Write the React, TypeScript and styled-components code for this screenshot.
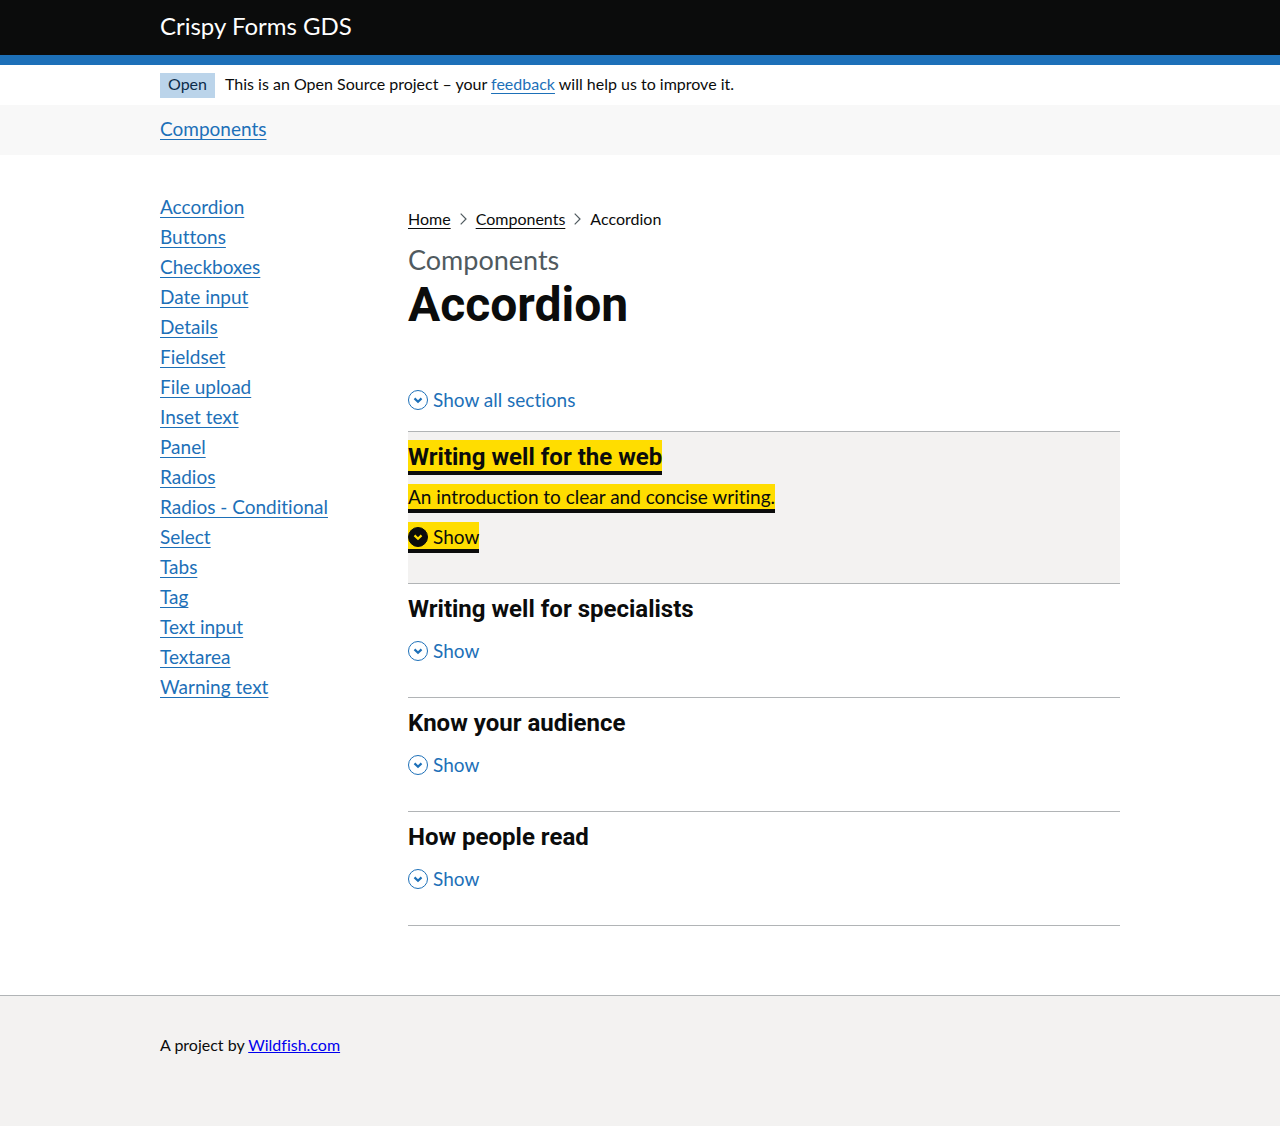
import React, { useState } from 'react';
import styled, { createGlobalStyle, css } from 'styled-components';

const colours = {
  text: '#0b0c0c',
  secondary: '#505a5f',
  link: '#1d70b8',
  border: '#b1b4b6',
  panel: '#f3f2f1',
  focus: '#ffdd00',
};

const GlobalStyle = createGlobalStyle`
  *, *::before, *::after { box-sizing: border-box; }
  body {
    margin: 0;
    color: ${colours.text};
    background: #ffffff;
    font-family: Lato, "Liberation Sans", sans-serif;
    font-size: 19px;
    font-variant-ligatures: none;
    line-height: 25px;
    -webkit-font-smoothing: antialiased;
  }
  button { font-variant-ligatures: inherit; }
`;

const Page = styled.div`
  display: flex;
  flex-direction: column;
  min-height: 100vh;
`;

const Container = styled.div`
  width: 100%;
  max-width: 1020px;
  margin: 0 auto;
  padding: 0 30px;
`;

const Link = styled.a<{ $tone?: 'text' }>`
  color: ${p => (p.$tone === 'text' ? colours.text : colours.link)};
  text-decoration: underline;
  text-decoration-thickness: 1px;
  text-decoration-skip-ink: none;
  text-underline-offset: 3px;
`;

const Header = styled.header`
  background: ${colours.text};
  border-bottom: 10px solid ${colours.link};
`;

const SiteName = styled.a`
  display: block;
  padding: 11px 0 14px;
  color: #ffffff;
  font-size: 24px;
  line-height: 30px;
  text-decoration: none;
`;

const PhaseBanner = styled.div`
  display: flex;
  align-items: baseline;
  gap: 10px;
  padding: 8px 0 7px;
  font-size: 16px;
  line-height: 20px;
`;

const Tag = styled.strong`
  padding: 1px 8px 4px;
  color: #0c2d4a;
  background: #bbd4ea;
  font-weight: 400;
`;

const PhaseText = styled.p`
  margin: 0;
`;

const TopNav = styled.nav`
  padding: 11px 0 14px;
  background: #f8f8f8;
`;

const Columns = styled.div`
  display: grid;
  grid-template-columns: 218px 1fr;
  gap: 30px;
  padding: 39px 0 69px;
`;

const SideList = styled.ul`
  display: grid;
  gap: 5px;
  align-content: start;
  margin: 0;
  padding: 0;
  list-style: none;
`;

const Main = styled.main`
  min-width: 0;
  padding-top: 15px;
`;

const Crumbs = styled.ol`
  display: flex;
  align-items: center;
  margin: 0;
  padding: 0 0 16px;
  font-size: 16px;
  line-height: 20px;
  list-style: none;
`;

const Crumb = styled.li`
  display: flex;
  align-items: center;
`;

const CrumbArrow = styled.svg`
  width: 7px;
  height: 12px;
  margin: 0 9px;
`;

const Caption = styled.span`
  display: block;
  color: ${colours.secondary};
  font-size: 27px;
  line-height: 30px;
`;

const Title = styled.h1`
  margin: 0 0 52px;
  font-family: Roboto, "Liberation Sans", sans-serif;
  font-size: 48px;
  font-weight: 700;
  line-height: 60px;
`;

const toggleText = css`
  display: flex;
  align-items: center;
  gap: 5px;
  color: ${colours.link};
  font-size: 19px;
  font-weight: 400;
`;

const ShowAll = styled.button`
  ${toggleText}
  height: 25px;
  margin: 0 0 19px;
  padding: 0;
  border: 0;
  background: none;
  font-family: inherit;
  cursor: pointer;
`;

const Icon = styled.svg`
  flex: none;
  width: 20px;
  height: 20px;
`;

const Accordion = styled.div`
  border-bottom: 1px solid ${colours.border};
`;

const SectionHeading = styled.h2`
  margin: 0;
  font-size: 24px;
`;

const SectionTitle = styled.span`
  height: 31px;
  padding-top: 2px;
  font-family: Roboto, "Liberation Sans", sans-serif;
  font-size: 24px;
  font-weight: 700;
  line-height: 30px;
`;

const SectionSummary = styled.span`
  font-size: 19px;
  font-weight: 400;
  line-height: 25px;
`;

const SectionToggle = styled.span`
  ${toggleText}
  height: 27px;
  padding: 3px 0 0;
  line-height: 24px;
`;

const SectionButton = styled.button<{ $active: boolean }>`
  display: flex;
  flex-direction: column;
  align-items: flex-start;
  gap: 13px;
  width: 100%;
  padding: 8px 0 34px;
  border: 0;
  border-top: 1px solid ${colours.border};
  outline: 0;
  color: ${colours.text};
  background: ${p => (p.$active ? colours.panel : 'transparent')};
  font-family: inherit;
  text-align: left;
  cursor: pointer;

  ${p => p.$active && css`
    & > span {
      color: ${colours.text};
      background: ${colours.focus};
      box-shadow: 0 4px ${colours.text};
    }
  `}
`;

const Footer = styled.footer`
  flex: 1;
  padding: 39px 0 60px;
  border-top: 1px solid ${colours.border};
  background: ${colours.panel};
  font-size: 16px;
  line-height: 20px;
`;

const FooterLink = styled.a`
  color: #0000ee;
`;

function Chevron({ active = false, open = false }: { active?: boolean; open?: boolean }) {
  return (
    <Icon viewBox="0 0 20 20" fill="none" aria-hidden="true">
      <circle cx="10" cy="10" r="9.5" stroke="currentColor" fill={active ? 'currentColor' : 'none'} />
      <path
        d={open ? 'M6.5 12 10 8.6l3.5 3.4' : 'M6.5 8.4 10 11.8l3.5-3.4'}
        stroke={active ? colours.focus : 'currentColor'}
        strokeWidth="2.2"
      />
    </Icon>
  );
}

function Arrow() {
  return (
    <CrumbArrow viewBox="0 0 7 12" fill="none" aria-hidden="true">
      <path d="M0.7 0.7 6 6 0.7 11.3" stroke={colours.secondary} strokeWidth="1.2" />
    </CrumbArrow>
  );
}

const components = [
  'Accordion', 'Buttons', 'Checkboxes', 'Date input', 'Details', 'Fieldset',
  'File upload', 'Inset text', 'Panel', 'Radios', 'Radios - Conditional',
  'Select', 'Tabs', 'Tag', 'Text input', 'Textarea', 'Warning text',
];

const sections = [
  { title: 'Writing well for the web', summary: 'An introduction to clear and concise writing.' },
  { title: 'Writing well for specialists' },
  { title: 'Know your audience' },
  { title: 'How people read' },
];

export default function App() {
  const [active, setActive] = useState(0);
  const [open, setOpen] = useState<number[]>([]);
  const allOpen = open.length === sections.length;

  const toggle = (index: number) =>
    setOpen(open.includes(index) ? open.filter(i => i !== index) : [...open, index]);

  return (
    <Page>
      <GlobalStyle />
      <Header>
        <Container>
          <SiteName href="#">Crispy Forms GDS</SiteName>
        </Container>
      </Header>
      <Container>
        <PhaseBanner>
          <Tag>Open</Tag>
          <PhaseText>
            This is an Open Source project – your <Link href="#feedback">feedback</Link> will help us to improve it.
          </PhaseText>
        </PhaseBanner>
      </Container>
      <TopNav aria-label="Main">
        <Container>
          <Link href="#components">Components</Link>
        </Container>
      </TopNav>
      <Container>
        <Columns>
          <nav aria-label="Components">
            <SideList>
              {components.map(name => (
                <li key={name}>
                  <Link href={`#${name.toLowerCase().replace(/\W+/g, '-')}`}>{name}</Link>
                </li>
              ))}
            </SideList>
          </nav>
          <Main>
            <nav aria-label="Breadcrumb">
              <Crumbs>
                <Crumb><Link $tone="text" href="#home">Home</Link><Arrow /></Crumb>
                <Crumb><Link $tone="text" href="#components">Components</Link><Arrow /></Crumb>
                <Crumb aria-current="page">Accordion</Crumb>
              </Crumbs>
            </nav>
            <Caption>Components</Caption>
            <Title>Accordion</Title>
            <ShowAll type="button" onClick={() => setOpen(allOpen ? [] : sections.map((_, i) => i))}>
              <Chevron open={allOpen} />
              {allOpen ? 'Hide all sections' : 'Show all sections'}
            </ShowAll>
            <Accordion>
              {sections.map((section, index) => (
                <SectionHeading key={section.title}>
                  <SectionButton
                    type="button"
                    $active={active === index}
                    aria-expanded={open.includes(index)}
                    onFocus={() => setActive(index)}
                    onClick={() => toggle(index)}
                  >
                    <SectionTitle>{section.title}</SectionTitle>
                    {section.summary && <SectionSummary>{section.summary}</SectionSummary>}
                    <SectionToggle>
                      <Chevron active={active === index} open={open.includes(index)} />
                      {open.includes(index) ? 'Hide' : 'Show'}
                    </SectionToggle>
                  </SectionButton>
                </SectionHeading>
              ))}
            </Accordion>
          </Main>
        </Columns>
      </Container>
      <Footer>
        <Container>
          A project by <FooterLink href="#wildfish">Wildfish.com</FooterLink>
        </Container>
      </Footer>
    </Page>
  );
}
